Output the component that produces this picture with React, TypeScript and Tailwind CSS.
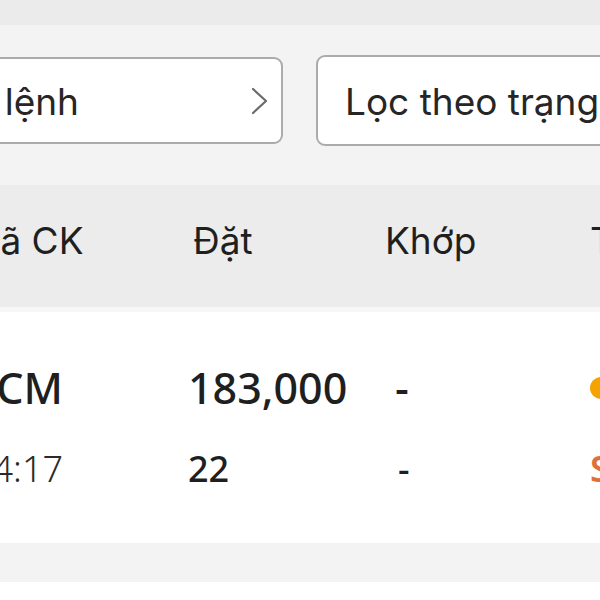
import React from "react";

export default function App() {
  const inter = { fontFamily: "Inter, 'Liberation Sans', sans-serif" };
  const open = { fontFamily: "'Noto Sans', 'Open Sans', sans-serif" };
  return (
    <div className="w-[600px] h-[600px] overflow-hidden bg-white flex flex-col">
      <div className="h-[25px] shrink-0 bg-[#ebebeb]" />
      <div className="h-[160px] shrink-0 bg-[#f3f3f3] flex items-start gap-[33px]" style={inter}>
        <div className="mt-[32px] ml-[-200px] w-[483px] h-[87px] shrink-0 bg-white border-2 border-[#ababab] rounded-[9px] flex items-center">
          <div className="w-[277px] shrink-0 overflow-hidden flex justify-end whitespace-nowrap text-[37px] text-[#262626] pt-[3px]">Loại lệnh</div>
          <div className="ml-[171px] flex items-center">
            <svg width="20" height="28" viewBox="0 0 20 28" fill="none">
              <path d="M3 2 L16 14 L3 26" stroke="#6b6b6b" strokeWidth="2.2" strokeLinecap="round" strokeLinejoin="round" />
            </svg>
          </div>
        </div>
        <div className="mt-[30px] w-[320px] h-[91px] shrink-0 bg-white border-2 border-[#ababab] rounded-[9px] flex items-center pl-[27px] whitespace-nowrap text-[37px] text-[#262626] pt-[2px]">
          Lọc theo trạng thái
        </div>
      </div>
      <div className="h-[122px] shrink-0 bg-[#ececec] flex items-center whitespace-nowrap text-[37px] text-[#1f1f1f] pb-[10px]" style={inter}>
        <div className="ml-[-33px] w-[226px] shrink-0">Mã CK</div>
        <div className="w-[192px] shrink-0">Đặt</div>
        <div className="w-[205px] shrink-0">Khớp</div>
        <div className="shrink-0">Trạng thái</div>
      </div>
      <div className="h-[5px] shrink-0 bg-[#f7f7f7]" />
      <div className="h-[231px] shrink-0 bg-white flex whitespace-nowrap text-[#1f1f1f] pt-[46px]" style={open}>
        <div className="w-[188px] shrink-0 flex flex-col">
          <div className="ml-[-36px] text-[43px] leading-[60px] font-medium">HCM</div>
          <div className="ml-[-28px] mt-[26px] text-[36px] leading-[50px] font-light text-[#2a2a2a]">14:17</div>
        </div>
        <div className="w-[207px] shrink-0 flex flex-col">
          <div className="text-[43px] leading-[60px] font-medium">183,000</div>
          <div className="mt-[26px] text-[36px] leading-[50px] font-medium">22</div>
        </div>
        <div className="w-[195px] shrink-0 flex flex-col">
          <div className="text-[43px] leading-[60px] font-medium">-</div>
          <div className="mt-[26px] text-[36px] leading-[50px] font-medium ml-[3px]">-</div>
        </div>
        <div className="shrink-0 flex flex-col">
          <div className="h-[60px] flex items-center">
            <div className="w-[22px] h-[22px] rounded-full bg-[#f5a300]" />
          </div>
          <div className="mt-[26px] text-[36px] leading-[50px] font-semibold text-[#e0703a]">Sửa</div>
        </div>
      </div>
      <div className="h-[39px] shrink-0 bg-[#f3f3f3]" />
      <div className="flex-1 bg-white" />
    </div>
  );
}
